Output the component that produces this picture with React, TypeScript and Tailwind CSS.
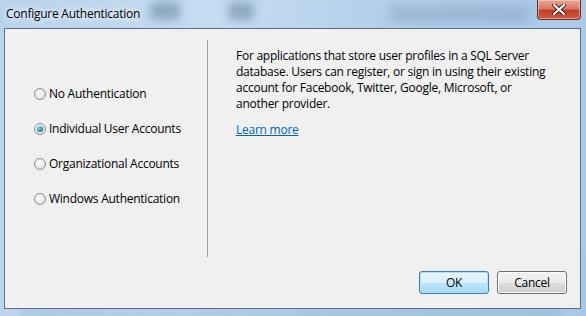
export default function App() {
  const options = [
    { label: "No Authentication", checked: false },
    { label: "Individual User Accounts", checked: true },
    { label: "Organizational Accounts", checked: false },
    { label: "Windows Authentication", checked: false },
  ];

  return (
    <div className="relative flex h-[316px] w-[586px] flex-col overflow-hidden bg-[linear-gradient(100deg,#b9d3ec_0%,#c6dcf1_35%,#b3cfeb_60%,#a9c8e8_100%)] font-['Open_Sans',sans-serif] text-[12px] tracking-[-0.25px] text-black">
      {/* blurred background glass */}
      <div className="absolute left-[150px] top-[2px] h-[18px] w-[30px] rounded bg-[#5b7897] opacity-50 blur-[5px]" />
      <div className="absolute left-[228px] top-[2px] h-[18px] w-[26px] rounded bg-[#5b7897] opacity-50 blur-[5px]" />
      <div className="absolute left-[390px] top-[6px] h-[16px] w-[140px] rounded bg-[#8aa6c4] opacity-60 blur-[6px]" />
      <div className="absolute bottom-0 left-[20px] h-[6px] w-[540px] bg-[#8fb2d6] opacity-60 blur-[3px]" />

      {/* Title bar */}
      <div className="relative flex h-[28px] items-center pl-[6px]">
        <span className="leading-none [text-shadow:0_0_6px_#fff,0_0_10px_#fff]">
          Configure Authentication
        </span>
        <div className="absolute right-[5px] top-0 flex h-[20px] w-[44px] items-center justify-center rounded-b-[4px] border border-t-0 border-[#6b2a20] bg-[linear-gradient(180deg,#e9a898_0%,#d87a63_45%,#c2402a_55%,#cf5a3e_100%)] shadow-[inset_0_0_0_1px_rgba(255,220,210,0.5)]">
          <svg width="14" height="11" viewBox="0 0 14 11">
            <path
              d="M2 1 L12 10 M12 1 L2 10"
              stroke="#4a1a12"
              strokeWidth="4"
              strokeLinecap="round"
            />
            <path
              d="M2 1 L12 10 M12 1 L2 10"
              stroke="#fff"
              strokeWidth="2.2"
              strokeLinecap="round"
            />
          </svg>
        </div>
      </div>

      {/* Client area */}
      <div className="relative ml-[4px] mr-[5px] mb-[7px] flex flex-1 flex-col border border-[#5d6f84] bg-[#f0f0f0]">
        <div className="mt-[11px] flex h-[217px]">
          <div className="w-[203px] border-r border-[#a0a0a0] pl-[29px] pt-[36px]">
            {options.map((o) => (
              <div key={o.label} className="flex h-[35px] items-center gap-[3px]">
                <span className="flex h-[12px] w-[12px] items-center justify-center rounded-full border border-[#8e8f8f] bg-[radial-gradient(circle_at_40%_40%,#fdfdfd,#d6d6d6)]">
                  {o.checked && (
                    <span className="h-[6px] w-[6px] rounded-full bg-[radial-gradient(circle_at_40%_35%,#8ae0f5,#1a78a8_70%,#0d4f7a)]" />
                  )}
                </span>
                <span className="leading-none">{o.label}</span>
              </div>
            ))}
          </div>
          <div className="pl-[28px] pt-[8px] leading-[16px]">
            <p>
              For applications that store user profiles in a SQL Server
              <br />
              database. Users can register, or sign in using their existing
              <br />
              account for Facebook, Twitter, Google, Microsoft, or
              <br />
              another provider.
            </p>
            <a href="#" className="mt-[10px] inline-block text-[#0066cc] underline">
              Learn more
            </a>
          </div>
        </div>

        <div className="mt-auto mb-[14px] mr-[13px] flex justify-end gap-[8px]">
          <button className="h-[23px] w-[70px] rounded-[3px] border border-[#3c7fb1] bg-[linear-gradient(180deg,#eaf6fd_0%,#d9f0fc_50%,#bee6fd_51%,#a7d9f5_100%)] shadow-[inset_0_0_0_1px_#aee2f7]">
            OK
          </button>
          <button className="h-[23px] w-[70px] rounded-[3px] border border-[#707070] bg-[linear-gradient(180deg,#f2f2f2_0%,#ebebeb_50%,#dddddd_51%,#cfcfcf_100%)] shadow-[inset_0_0_0_1px_#fcfcfc]">
            Cancel
          </button>
        </div>
      </div>
    </div>
  );
}
